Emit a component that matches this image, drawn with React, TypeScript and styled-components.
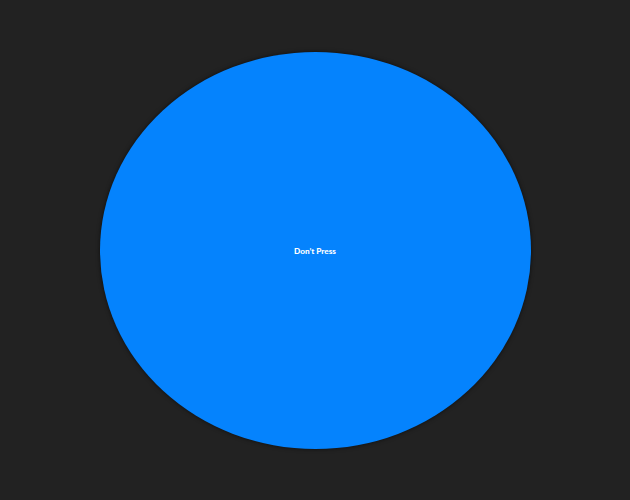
import React from "react";
import styled, { createGlobalStyle } from "styled-components";

const Global = createGlobalStyle`
  html, body { margin: 0; padding: 0; background: #222222; }
  #root { height: 100vh; }
`;

const Stage = styled.main`
  height: 100vh;
  display: flex;
  align-items: center;
  justify-content: center;
  background: #222222;
`;

const BigButton = styled.button`
  width: 431px;
  height: 397px;
  border: none;
  border-radius: 50%;
  background: #0583fd;
  color: #ffffff;
  font-family: Lato, "Open Sans", sans-serif;
  font-weight: 900;
  font-size: 8.2px;
  box-shadow: 0 0 4px rgba(0, 0, 0, 0.6);
  cursor: pointer;
  padding: 1.5px 0 0;
`;

export default function App() {
  return (
    <>
      <Global />
      <Stage>
        <BigButton>Don’t Press</BigButton>
      </Stage>
    </>
  );
}
